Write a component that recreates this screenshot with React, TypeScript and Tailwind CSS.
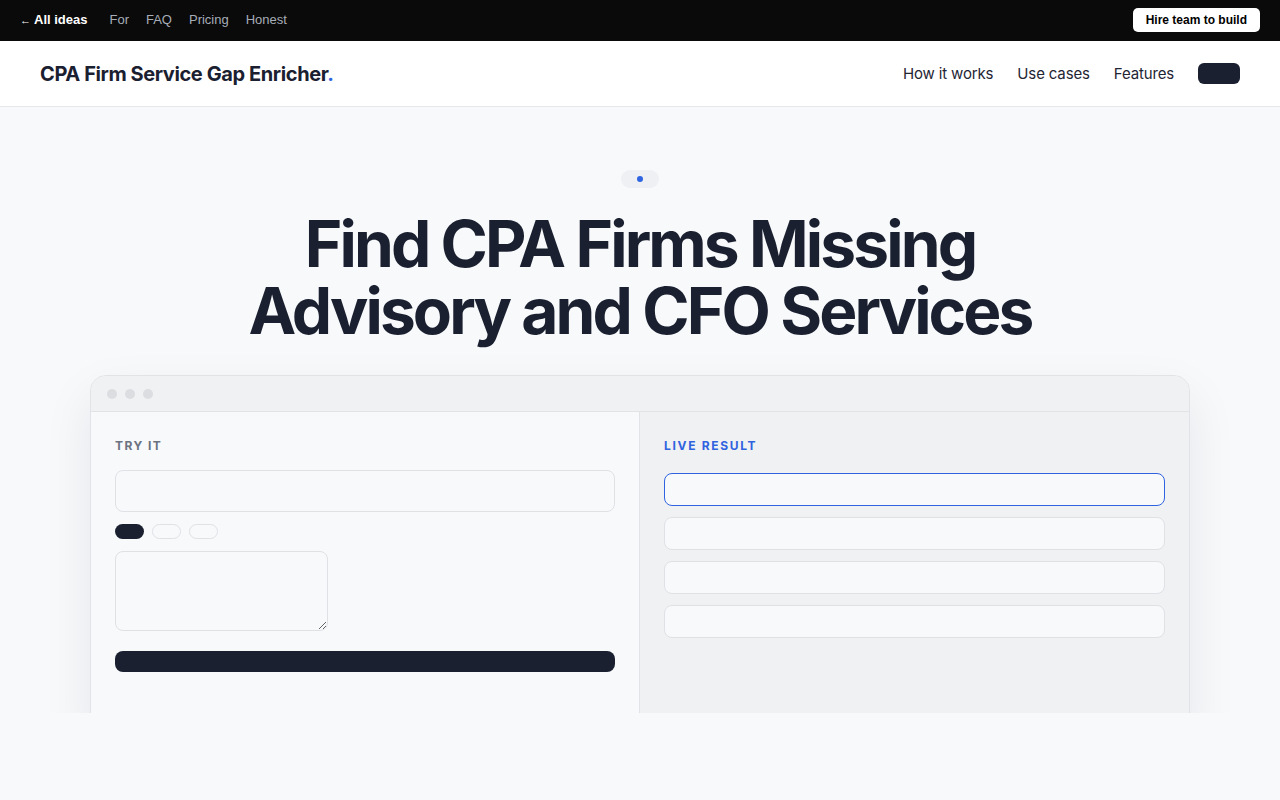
import React from "react";

const sans = { fontFamily: "Inter, 'Noto Sans', sans-serif" };

function TopBar() {
  return (
    <div
      className="h-[41px] pb-px bg-[#0a0a0a] flex items-center justify-between px-5"
      style={{ fontFamily: "'Liberation Sans', Arial, sans-serif" }}
    >
      <div className="flex items-center gap-[17px] text-[13px]">
        <a className="text-white font-bold mr-[5px]">
          <span className="font-normal text-[11px] mr-[3px]">←</span>All ideas
        </a>
        <a className="text-[#a7adb7]">For</a>
        <a className="text-[#a7adb7]">FAQ</a>
        <a className="text-[#a7adb7]">Pricing</a>
        <a className="text-[#a7adb7]">Honest</a>
      </div>
      <button className="bg-white text-black text-[12px] font-bold rounded-[5px] h-6 px-[13px]">
        Hire team to build
      </button>
    </div>
  );
}

function Header() {
  return (
    <header
      className="h-[66px] bg-white border-b border-[#e5e7eb] flex items-center justify-between px-10"
      style={sans}
    >
      <div className="text-[20px] font-bold tracking-[-0.02em] text-[#1a2030]">
        CPA Firm Service Gap Enricher<span className="text-[#2f63e0]">.</span>
      </div>
      <nav className="flex items-center gap-6 text-[15px] text-[#1f2533] tracking-[-0.01em]">
        <a className="pt-px">How it works</a>
        <a className="pt-px">Use cases</a>
        <a className="pt-px">Features</a>
        <button className="w-[42px] h-[21px] rounded-md bg-[#1a2030]" />
      </nav>
    </header>
  );
}

function Chip({ active }: { active?: boolean }) {
  return active ? (
    <span className="w-[29px] h-[15px] rounded-full bg-[#1a2030]" />
  ) : (
    <span className="w-[29px] h-[15px] rounded-full border border-[#dfe1e5] bg-[#f8f9fb]" />
  );
}

function AppWindow() {
  return (
    <div className="w-[1100px] mx-auto rounded-t-[16px] border border-[#e1e3e7] bg-[#f8f9fb] shadow-[0_20px_50px_rgba(15,23,42,0.08)] overflow-hidden">
      <div className="h-9 bg-[#f0f1f3] border-b border-[#e1e3e7] flex items-center gap-2 px-4">
        <span className="w-[10px] h-[10px] rounded-full bg-[#dcdde0]" />
        <span className="w-[10px] h-[10px] rounded-full bg-[#dcdde0]" />
        <span className="w-[10px] h-[10px] rounded-full bg-[#dcdde0]" />
      </div>
      <div className="grid grid-cols-2 h-[320px]">
        <div className="px-6 pt-[26px] bg-[#f8f9fb] border-r border-[#e1e3e7]">
          <div className="text-[12px] font-bold tracking-[0.12em] text-[#6b7280] leading-4" style={sans}>
            TRY IT
          </div>
          <div className="mt-4 h-[42px] rounded-lg border border-[#dfe1e5] bg-[#f8f9fb]" />
          <div className="mt-3 flex gap-2">
            <Chip active />
            <Chip />
            <Chip />
          </div>
          <textarea className="mt-3 block w-[213px] h-[80px] rounded-lg border border-[#dfe1e5] bg-[#f8f9fb] outline-none" />
          <div className="mt-5 h-[21px] rounded-lg bg-[#1a2030]" />
        </div>
        <div className="px-6 pt-[26px] bg-[#f0f1f3]">
          <div className="text-[12px] font-bold tracking-[0.14em] text-[#2f63e0] leading-4" style={sans}>
            LIVE RESULT
          </div>
          <div className="mt-[19px] flex flex-col gap-[11px]">
            <div className="h-[33px] rounded-lg border border-[#2f63e0] bg-[#f8f9fb]" />
            <div className="h-[33px] rounded-lg border border-[#dfe1e5] bg-[#f8f9fb]" />
            <div className="h-[33px] rounded-lg border border-[#dfe1e5] bg-[#f8f9fb]" />
            <div className="h-[33px] rounded-lg border border-[#dfe1e5] bg-[#f8f9fb]" />
          </div>
        </div>
      </div>
    </div>
  );
}

function Hero() {
  return (
    <section className="h-[606px] overflow-hidden bg-[#f8f9fb] pt-[63px]">
      <div className="flex justify-center">
        <span className="w-[38px] h-[18px] rounded-full bg-[#eef0f3] flex items-center justify-center">
          <span className="w-[6px] h-[6px] rounded-full bg-[#2f63e0]" />
        </span>
      </div>
      <h1
        className="mt-[22px] text-center text-[64px] leading-[67px] font-bold tracking-[-0.045em] text-[#1a2030]"
        style={sans}
      >
        Find CPA Firms Missing
        <br />
        Advisory and CFO Services
      </h1>
      <div className="mt-[31px] px-[90px]">
        <AppWindow />
      </div>
    </section>
  );
}

export default function App() {
  return (
    <div className="min-h-[800px] bg-[#f8f9fb]">
      <TopBar />
      <Header />
      <Hero />
    </div>
  );
}
